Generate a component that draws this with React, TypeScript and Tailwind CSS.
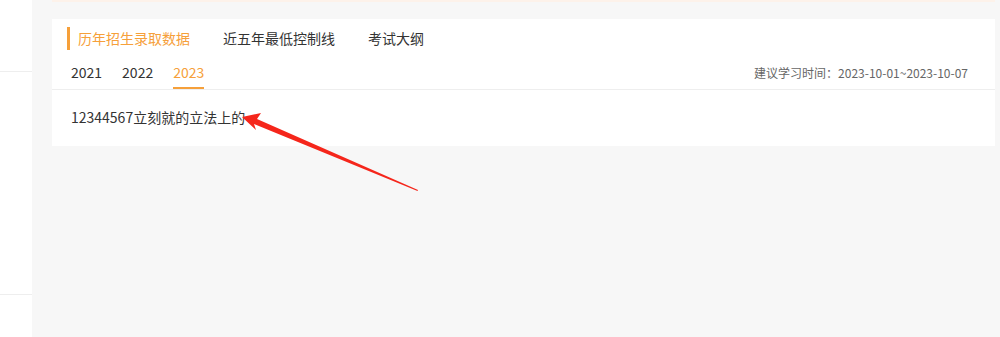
import { useState } from "react"

const mainTabs = ["历年招生录取数据", "近五年最低控制线", "考试大纲"]
const years = ["2021", "2022", "2023"]

export default function App() {
  const [tab, setTab] = useState(0)
  const [year, setYear] = useState("2023")

  return (
    <div
      className="relative flex w-[1000px] h-[337px] overflow-hidden bg-[#f7f7f7] text-[#333]"
      style={{ fontFamily: '"Noto Sans CJK SC", "Noto Sans", sans-serif' }}
    >
      {/* left sidebar */}
      <aside className="w-[32px] shrink-0 bg-white flex flex-col">
        <div className="h-[72px] border-b border-[#eee]" />
        <div className="h-[223px] border-b border-[#eee]" />
      </aside>

      <main className="flex-1 pl-[20px] pr-[5px]">
        <div className="h-[2px] bg-[#fdf2ea]" />
        <section className="mt-[17px] bg-white">
          <div className="flex items-start h-[39px] pt-[8px] pl-[15px]">
            {mainTabs.map((t, i) => (
              <button
                key={t}
                onClick={() => setTab(i)}
                className={
                  "flex items-center h-[23px] text-[14px] mr-[33px] " +
                  (tab === i ? "text-[#f6a03a] border-l-[3px] border-[#f6a03a] pl-[8px]" : "text-[#333] pl-[0px]")
                }
              >
                {t}
              </button>
            ))}
          </div>
          <div className="flex items-end justify-between h-[32px] border-b border-[#eee] pl-[19px] pr-[27px]">
            <div className="flex gap-[20px]">
              {years.map(y => (
                <button
                  key={y}
                  onClick={() => setYear(y)}
                  className={
                    "text-[14px] leading-[20px] pb-[5px] border-b-2 " +
                    (year === y ? "text-[#f6a03a] border-[#f6a03a]" : "text-[#333] border-transparent")
                  }
                >
                  {y}
                </button>
              ))}
            </div>
            <span className="text-[12px] text-[#666] pb-[7px]">建议学习时间：2023-10-01~2023-10-07</span>
          </div>
          <div className="h-[56px] pb-[2px] flex items-center pl-[19px] text-[14px]">12344567立刻就的立法上的</div>
        </section>
      </main>

      {/* annotation arrow */}
      <svg className="absolute left-0 top-0 pointer-events-none" width="1000" height="337">
        <polygon points="418,190 417.5,191 254,124 256,130 242,117 261,113 257,119" fill="#f5261b" />
      </svg>
    </div>
  )
}
